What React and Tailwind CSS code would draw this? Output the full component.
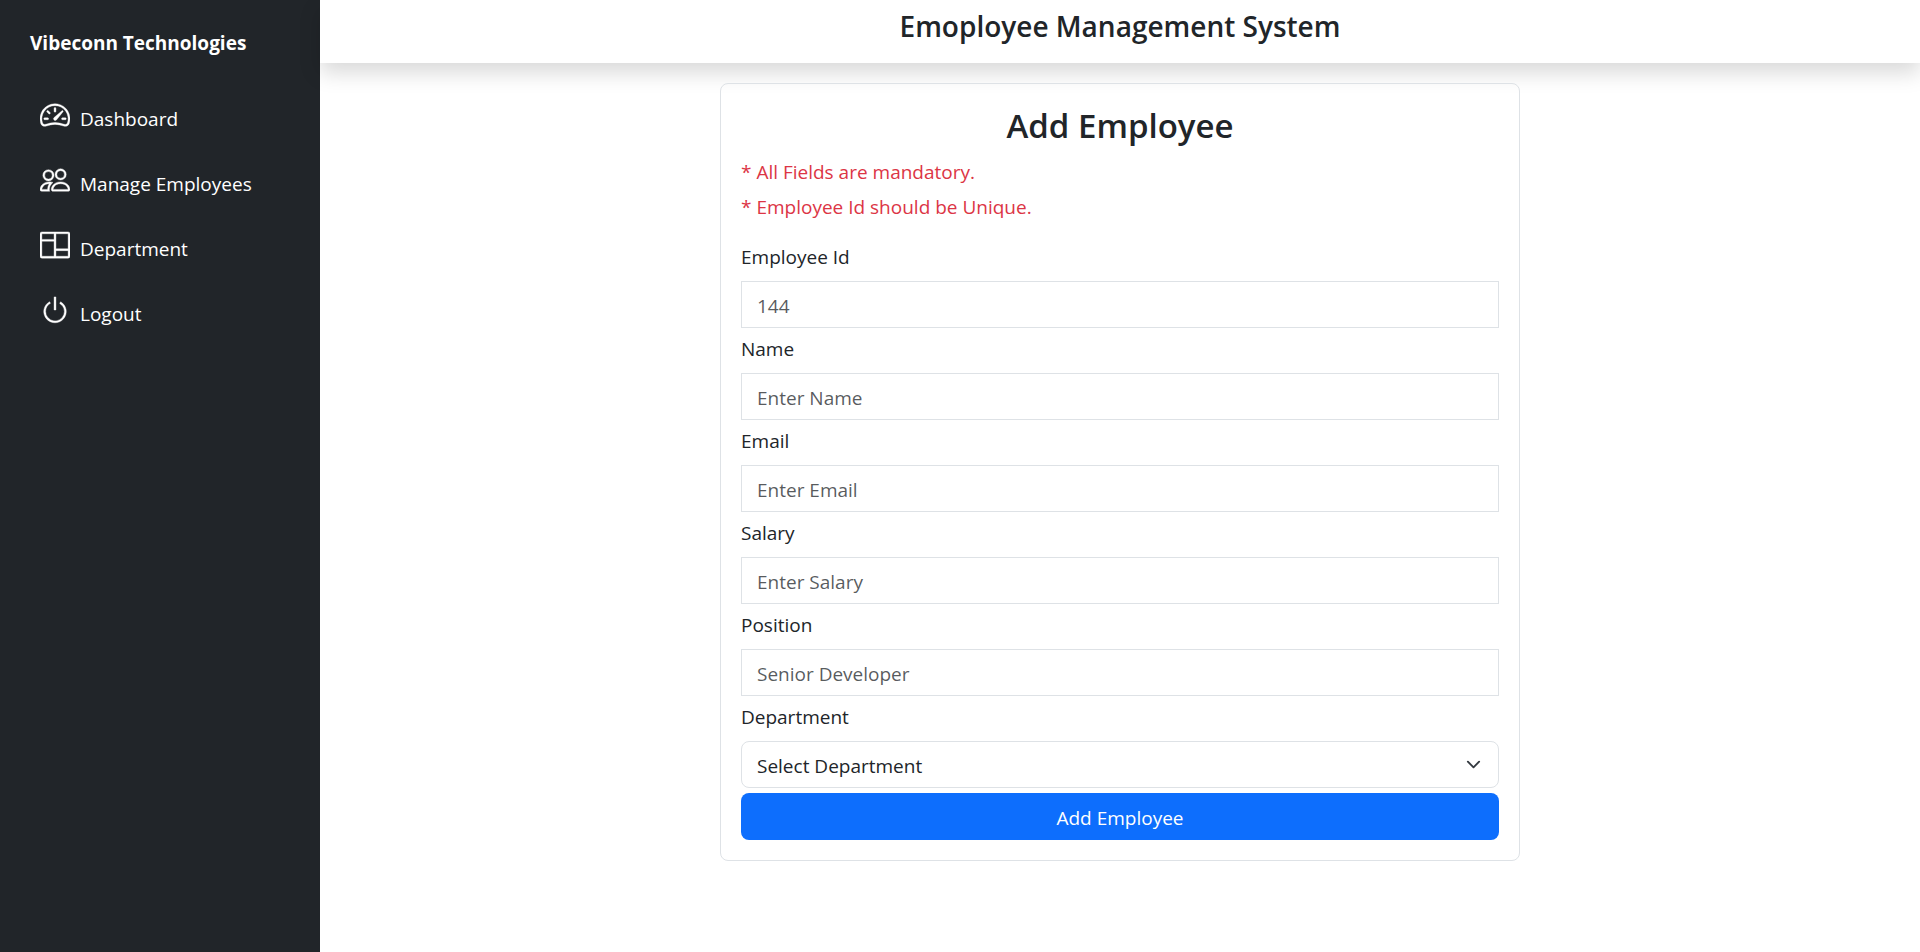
import React from "react";
import { BsSpeedometer2, BsPeople, BsColumns, BsPower } from "react-icons/bs";

const links = [
  { label: "Dashboard", Icon: BsSpeedometer2 },
  { label: "Manage Employees", Icon: BsPeople },
  { label: "Department", Icon: BsColumns },
  { label: "Logout", Icon: BsPower },
];

const fields = [
  { id: "employeeId", label: "Employee Id", type: "text", placeholder: "144" },
  { id: "name", label: "Name", type: "text", placeholder: "Enter Name" },
  { id: "email", label: "Email", type: "email", placeholder: "Enter Email" },
  { id: "salary", label: "Salary", type: "text", placeholder: "Enter Salary" },
  { id: "position", label: "Position", type: "text", placeholder: "Senior Developer" },
];

function Sidebar() {
  return (
    <aside className="w-1/6 shrink-0 bg-[#212529] text-white">
      <a href="#" className="block px-[30px] pt-7 pb-[26px] text-[19px] leading-[30px] font-bold whitespace-nowrap">
        Vibeconn Technologies
      </a>
      <nav>
        <ul>
          {links.map(({ label, Icon }) => (
            <li key={label}>
              <a href="#" className="flex items-end gap-[10px] px-10 pt-4 pb-[15px] leading-[30px] whitespace-nowrap">
                <Icon className="mb-1 size-[30px] shrink-0 [stroke-width:0.2]" aria-hidden="true" />
                {label}
              </a>
            </li>
          ))}
        </ul>
      </nav>
    </aside>
  );
}

function Field({ id, label, type, placeholder }) {
  return (
    <div className="flex flex-col gap-2">
      <label htmlFor={id} className="leading-8">{label}</label>
      <input
        id={id}
        type={type}
        placeholder={placeholder}
        autoComplete="off"
        className="h-[47px] w-full border border-[#dee2e6] bg-white px-[15px] pt-[2px] placeholder:text-[#212529]/75"
      />
    </div>
  );
}

function DepartmentSelect() {
  return (
    <div className="flex flex-col gap-2">
      <label htmlFor="department" className="leading-8">Department</label>
      <div className="relative">
        <select
          id="department"
          className="h-[47px] w-full appearance-none rounded-[8px] border border-[#dee2e6] bg-white pt-[2px] pr-12 pl-[15px]"
        >
          <option>Select Department</option>
        </select>
        <svg
          viewBox="0 0 16 16"
          className="pointer-events-none absolute top-4 right-[18px] size-[15px]"
          fill="none"
          stroke="#343a40"
          strokeWidth="2"
          strokeLinecap="round"
          strokeLinejoin="round"
          aria-hidden="true"
        >
          <path d="m2 5 6 6 6-6" />
        </svg>
      </div>
    </div>
  );
}

export default function App() {
  return (
    <div className="flex min-h-screen bg-white font-['Open_Sans','Noto_Sans',sans-serif] text-[19px] leading-[30px] text-[#212529]">
      <Sidebar />
      <main className="flex min-w-0 flex-1 flex-col">
        <header className="flex h-[63px] justify-center pt-2 shadow-[0_10px_20px_rgba(0,0,0,0.15)]">
          <h1 className="text-[28px] leading-9 font-semibold">Emoployee Management System</h1>
        </header>
        <div className="mt-5 flex justify-center">
          <section className="w-1/2 rounded-[8px] border border-[#dee2e6] p-5">
            <h2 className="mb-2 text-center text-[33px] leading-[44px] font-semibold">Add Employee</h2>
            <div className="mb-[18px] flex flex-col gap-[3px] leading-8 text-[#dc3545]">
              <p>* All Fields are mandatory.</p>
              <p>* Employee Id should be Unique.</p>
            </div>
            <form className="flex flex-col gap-[5px]" onSubmit={(e) => e.preventDefault()}>
              {fields.map((field) => (
                <Field key={field.id} {...field} />
              ))}
              <DepartmentSelect />
              <button type="submit" className="h-[47px] w-full rounded-[8px] bg-[#0d6efd] pt-[2px] text-white">
                Add Employee
              </button>
            </form>
          </section>
        </div>
      </main>
    </div>
  );
}
